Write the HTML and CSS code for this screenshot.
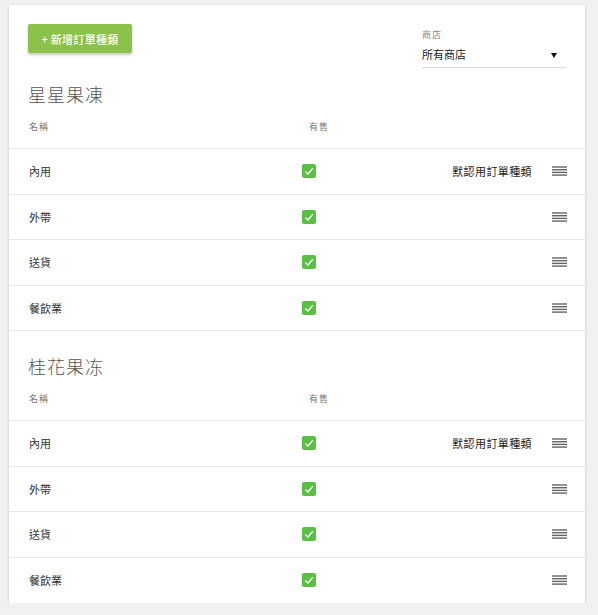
FILE: index.html
```html
<!DOCTYPE html>
<html lang="zh-Hant">
<head>
<meta charset="utf-8">
<title>訂單種類</title>
<link rel="stylesheet" href="styles.css">
</head>
<body>
<div class="card">
  <div class="toolbar">
    <button class="add-btn">+ 新增訂單種類</button>
    <div class="store">
      <div class="store-label">商店</div>
      <div class="store-select">
        <span>所有商店</span>
        <svg class="caret" width="6" height="5" viewBox="0 0 6 5"><polygon points="0,0 6,0 3,5" fill="#111"/></svg>
      </div>
    </div>
  </div>

  <div class="section first">
    <h2 class="section-title">星星果凍</h2>
    <div class="head-row">
      <div class="col-name">名稱</div>
      <div class="col-sale">有售</div>
    </div>
    <div class="row">
      <div class="col-name">內用</div>
      <span class="check"><svg width="14" height="14" viewBox="0 0 14 14"><polyline points="3.2,7.4 5.9,10 10.9,4.2" fill="none" stroke="#fff" stroke-width="1.3"/></svg></span>
      <span class="spacer"></span>
      <span class="default">默認用訂單種類</span>
      <svg class="handle" width="15" height="10" viewBox="0 0 15 10"><rect y="0.3" width="15" height="1.4" fill="#666"/><rect y="3" width="15" height="1.4" fill="#666"/><rect y="5.7" width="15" height="1.4" fill="#666"/><rect y="8.4" width="15" height="1.4" fill="#666"/></svg>
    </div>
    <div class="row">
      <div class="col-name">外帶</div>
      <span class="check"><svg width="14" height="14" viewBox="0 0 14 14"><polyline points="3.2,7.4 5.9,10 10.9,4.2" fill="none" stroke="#fff" stroke-width="1.3"/></svg></span>
      <span class="spacer"></span>
      <svg class="handle" width="15" height="10" viewBox="0 0 15 10"><rect y="0.3" width="15" height="1.4" fill="#666"/><rect y="3" width="15" height="1.4" fill="#666"/><rect y="5.7" width="15" height="1.4" fill="#666"/><rect y="8.4" width="15" height="1.4" fill="#666"/></svg>
    </div>
    <div class="row">
      <div class="col-name">送貨</div>
      <span class="check"><svg width="14" height="14" viewBox="0 0 14 14"><polyline points="3.2,7.4 5.9,10 10.9,4.2" fill="none" stroke="#fff" stroke-width="1.3"/></svg></span>
      <span class="spacer"></span>
      <svg class="handle" width="15" height="10" viewBox="0 0 15 10"><rect y="0.3" width="15" height="1.4" fill="#666"/><rect y="3" width="15" height="1.4" fill="#666"/><rect y="5.7" width="15" height="1.4" fill="#666"/><rect y="8.4" width="15" height="1.4" fill="#666"/></svg>
    </div>
    <div class="row">
      <div class="col-name">餐飲業</div>
      <span class="check"><svg width="14" height="14" viewBox="0 0 14 14"><polyline points="3.2,7.4 5.9,10 10.9,4.2" fill="none" stroke="#fff" stroke-width="1.3"/></svg></span>
      <span class="spacer"></span>
      <svg class="handle" width="15" height="10" viewBox="0 0 15 10"><rect y="0.3" width="15" height="1.4" fill="#666"/><rect y="3" width="15" height="1.4" fill="#666"/><rect y="5.7" width="15" height="1.4" fill="#666"/><rect y="8.4" width="15" height="1.4" fill="#666"/></svg>
    </div>
  </div>

  <div class="section">
    <h2 class="section-title">桂花果冻</h2>
    <div class="head-row">
      <div class="col-name">名稱</div>
      <div class="col-sale">有售</div>
    </div>
    <div class="row">
      <div class="col-name">內用</div>
      <span class="check"><svg width="14" height="14" viewBox="0 0 14 14"><polyline points="3.2,7.4 5.9,10 10.9,4.2" fill="none" stroke="#fff" stroke-width="1.3"/></svg></span>
      <span class="spacer"></span>
      <span class="default">默認用訂單種類</span>
      <svg class="handle" width="15" height="10" viewBox="0 0 15 10"><rect y="0.3" width="15" height="1.4" fill="#666"/><rect y="3" width="15" height="1.4" fill="#666"/><rect y="5.7" width="15" height="1.4" fill="#666"/><rect y="8.4" width="15" height="1.4" fill="#666"/></svg>
    </div>
    <div class="row">
      <div class="col-name">外帶</div>
      <span class="check"><svg width="14" height="14" viewBox="0 0 14 14"><polyline points="3.2,7.4 5.9,10 10.9,4.2" fill="none" stroke="#fff" stroke-width="1.3"/></svg></span>
      <span class="spacer"></span>
      <svg class="handle" width="15" height="10" viewBox="0 0 15 10"><rect y="0.3" width="15" height="1.4" fill="#666"/><rect y="3" width="15" height="1.4" fill="#666"/><rect y="5.7" width="15" height="1.4" fill="#666"/><rect y="8.4" width="15" height="1.4" fill="#666"/></svg>
    </div>
    <div class="row">
      <div class="col-name">送貨</div>
      <span class="check"><svg width="14" height="14" viewBox="0 0 14 14"><polyline points="3.2,7.4 5.9,10 10.9,4.2" fill="none" stroke="#fff" stroke-width="1.3"/></svg></span>
      <span class="spacer"></span>
      <svg class="handle" width="15" height="10" viewBox="0 0 15 10"><rect y="0.3" width="15" height="1.4" fill="#666"/><rect y="3" width="15" height="1.4" fill="#666"/><rect y="5.7" width="15" height="1.4" fill="#666"/><rect y="8.4" width="15" height="1.4" fill="#666"/></svg>
    </div>
    <div class="row">
      <div class="col-name">餐飲業</div>
      <span class="check"><svg width="14" height="14" viewBox="0 0 14 14"><polyline points="3.2,7.4 5.9,10 10.9,4.2" fill="none" stroke="#fff" stroke-width="1.3"/></svg></span>
      <span class="spacer"></span>
      <svg class="handle" width="15" height="10" viewBox="0 0 15 10"><rect y="0.3" width="15" height="1.4" fill="#666"/><rect y="3" width="15" height="1.4" fill="#666"/><rect y="5.7" width="15" height="1.4" fill="#666"/><rect y="8.4" width="15" height="1.4" fill="#666"/></svg>
    </div>
  </div>
</div>
</body>
</html>
```
FILE: styles.css
```css
* { box-sizing: border-box; }
html, body { margin: 0; padding: 0; }
body {
  background: #f1f1f1;
  font-family: "Noto Sans CJK TC", "Noto Sans", sans-serif;
  color: #333;
}
.card {
  margin: 5px 0 0 9px;
  width: 576px;
  background: #fff;
  box-shadow: 0 1px 3px rgba(0,0,0,0.18);
}
.toolbar {
  display: flex;
  justify-content: space-between;
  align-items: flex-start;
  padding: 19px 19px 0 19px;
}
.add-btn {
  height: 29px;
  width: 104px;
  padding: 0;
  border: none;
  border-radius: 2px;
  background: #8bc34a;
  color: #fff;
  font-family: inherit;
  font-size: 11px;
  font-weight: 500;
  letter-spacing: 0.3px;
  box-shadow: 0 2px 3px rgba(0,0,0,0.22);
}
.store {
  width: 144px;
  margin-top: 5px;
}
.store-label {
  font-size: 9px;
  line-height: 12px;
  letter-spacing: 1px;
  color: #888;
}
.store-select {
  display: flex;
  align-items: center;
  justify-content: space-between;
  margin-top: 4px;
  height: 23px;
  padding: 0 9px 4px 0;
  border-bottom: 1px solid #ddd;
  font-size: 11px;
  color: #222;
}
.caret { margin-top: 3px; }
.section { padding-top: 23px; }
.section.first { padding-top: 14px; }
.section-title {
  margin: 0;
  padding-left: 19px;
  font-size: 18px;
  line-height: 24px;
  font-weight: 300;
  letter-spacing: 1px;
  color: #555;
}
.head-row {
  display: flex;
  padding: 15px 20px;
  font-size: 9px;
  line-height: 12px;
  letter-spacing: 1px;
  color: #777;
  border-bottom: 1px solid #e6e6e6;
}
.head-row .col-name { width: 273px; }
.col-sale { padding-left: 7px; }
.row {
  display: flex;
  align-items: center;
  height: 45.5px;
  padding: 0 18px 0 20px;
  border-bottom: 1px solid #e6e6e6;
  font-size: 11px;
  color: #333;
}
.section:last-child .row:last-child { border-bottom: none; }
.row .col-name { width: 273px; }
.check {
  display: block;
  width: 14px;
  height: 14px;
  border-radius: 2px;
  background: #5cbf45;
}
.check svg { display: block; }
.spacer { flex: 1; }
.default {
  margin-right: 20px;
  letter-spacing: 0.4px;
  color: #222;
}
.handle { display: block; }
```
